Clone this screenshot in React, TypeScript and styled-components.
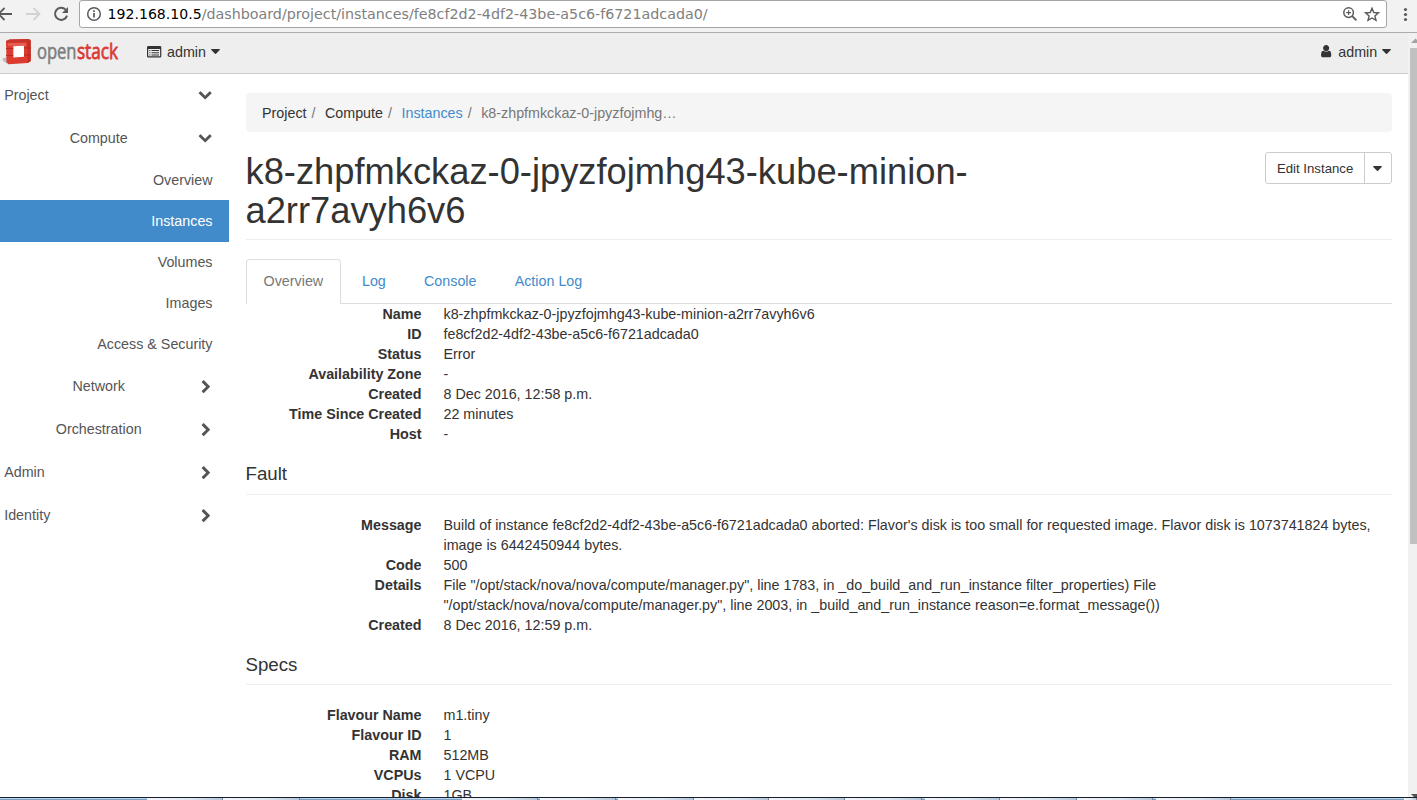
import React from "react";
import styled, { createGlobalStyle } from "styled-components";

const GlobalStyle = createGlobalStyle`
  * { box-sizing: border-box; }
  body { margin: 0; background: #fff; overflow: hidden; }
`;

const Screen = styled.div`
  height: 800px;
  width: 1417px;
  display: flex;
  flex-direction: column;
  overflow: hidden;
  font-family: "Liberation Sans", Arial, sans-serif;
  font-size: 14.3px;
  line-height: 20px;
  color: #333;
`;

/* Browser chrome */
const BrowserBar = styled.div`
  flex: none;
  height: 33px;
  display: flex;
  align-items: flex-start;
  background: #f2f2f2;
  border-bottom: 1px solid #ababab;
`;
const NavIcons = styled.div`
  width: 79px;
  height: 28px;
  flex: none;
`;
const AddressBox = styled.div`
  flex: none;
  width: 1308px;
  height: 28px;
  display: flex;
  align-items: center;
  padding: 0 5px 0 6px;
  background: #fff;
  border: 1px solid #a6a6a6;
  border-radius: 3px;
`;
const Url = styled.div`
  flex: 1;
  margin-left: 5.6px;
  font: 14.28px/20px "DejaVu Sans", sans-serif;
  color: #808080;
  white-space: nowrap;
`;
const Host = styled.span`
  font-size: 14.08px;
  color: #000;
`;
const MenuDots = styled.div`
  width: 30px;
  height: 28px;
`;

/* Page */
const Viewport = styled.div`
  flex: none;
  height: 764px;
  display: flex;
  overflow: hidden;
`;
const Page = styled.div`
  width: 1408px;
  flex: none;
  display: flex;
  flex-direction: column;
`;
const Scrollbar = styled.div`
  width: 9px;
  flex: none;
  display: flex;
  flex-direction: column;
  align-items: flex-end;
  background: #f1f1f1;
`;
const Thumb = styled.div`
  flex: none;
  width: 7px;
  height: 496px;
  margin-bottom: auto;
  background: #c1c1c1;
`;
const ScrollArrow = styled.div<{ $down?: boolean }>`
  flex: none;
  width: 6px;
  height: ${(p) => (p.$down ? "3px" : "15px")};
  svg { display: block; }
`;

const TopNav = styled.header`
  flex: none;
  height: 41px;
  display: flex;
  align-items: center;
  justify-content: space-between;
  padding: 0 16.6px 3px 0;
  background: #eee;
  border-bottom: 1px solid #ccc;
`;
const NavGroup = styled.div`
  display: flex;
  align-items: center;
`;
const Logo = styled.svg`
  display: block;
  margin-right: 22px;
`;
const NavLink = styled.span<{ $gap: number }>`
  display: flex;
  align-items: center;
  gap: ${(p) => p.$gap}px;
`;
const Caret = styled.svg`
  display: block;
  width: 9px;
  height: 5px;
  margin-left: 0.4px;
  fill: #333;
`;

const Body = styled.div`
  flex: 1;
  display: flex;
`;
const Sidebar = styled.nav`
  flex: none;
  width: 229px;
  color: #555;
`;
const NavGroupRow = styled.div<{ $nested?: boolean; $open?: boolean }>`
  height: ${(p) => (p.$open ? 42.675 : 42.9)}px;
  display: flex;
  align-items: center;
  justify-content: space-between;
  padding-right: 16px;
  padding-left: ${(p) => (p.$nested ? 0 : 4.2)}px;
`;
const NavGroupLabel = styled.span<{ $nested?: boolean }>`
  width: ${(p) => (p.$nested ? "197.4px" : "auto")};
  text-align: center;
`;
const Chevron = styled.svg<{ $open?: boolean }>`
  flex: none;
  width: 14.3px;
  height: 14.3px;
  margin: ${(p) => (p.$open ? "0 1.2px 1.6px 0" : "2px -0.5px 0 0")};
  fill: #555;
`;
const NavItem = styled.div<{ $active?: boolean }>`
  height: 41.1px;
  display: flex;
  align-items: center;
  justify-content: flex-end;
  padding-right: 16.5px;
  background: ${(p) => (p.$active ? "#428bca" : "transparent")};
  color: ${(p) => (p.$active ? "#fff" : "#555")};
`;

const Main = styled.main`
  flex: 1;
  padding: 19px 16.4px 0 16.5px;
`;
const Breadcrumb = styled.div`
  display: flex;
  height: 39px;
  padding: 10px 16.5px;
  background: #f5f5f5;
  border-radius: 4px;
  white-space: pre;
`;
const Crumb = styled.span<{ $tone?: "link" | "muted" }>`
  color: ${(p) => (p.$tone === "link" ? "#428bca" : p.$tone === "muted" ? "#777" : "#333")};
`;
const Slash = styled.span`
  padding: 0 9.5px 0 5px;
  color: #777;
`;
const TitleRow = styled.div`
  display: flex;
  justify-content: space-between;
  align-items: flex-start;
  height: 88px;
  margin-top: 20px;
  border-bottom: 1px solid #eee;
`;
const Title = styled.h1`
  width: 760px;
  margin: 0;
  font-size: 36.3px;
  line-height: 39px;
  font-weight: 400;
`;
const ButtonGroup = styled.div`
  display: flex;
  height: 32px;
  border: 1px solid #ccc;
  border-radius: 3px;
  font-size: 13.2px;
`;
const EditButton = styled.span`
  width: 99px;
  display: flex;
  align-items: center;
  justify-content: center;
  padding: 2px 0 0 1px;
  border-right: 1px solid #ccc;
`;
const ToggleButton = styled.span`
  width: 26px;
  display: flex;
  align-items: center;
  justify-content: center;
`;
const Tabs = styled.div`
  display: flex;
  height: 45px;
  margin-top: 19px;
  border-bottom: 1px solid #ddd;
`;
const Tab = styled.div<{ $active?: boolean }>`
  height: 45px;
  padding: 11px ${(p) => (p.$active ? 17.1 : 16.5)}px 0;
  margin-right: 3.2px;
  border: 1px solid ${(p) => (p.$active ? "#ddd" : "transparent")};
  border-bottom: 0;
  border-radius: 4px 4px 0 0;
  background: ${(p) => (p.$active ? "#fff" : "transparent")};
  color: ${(p) => (p.$active ? "#777" : "#428bca")};
`;
const SectionTitle = styled.h4`
  height: 30.6px;
  margin: 20px 0;
  font-size: 18.7px;
  line-height: 20px;
  font-weight: 400;
  border-bottom: 1px solid #eee;
`;
const Details = styled.dl`
  display: grid;
  grid-template-columns: 176px 1fr;
  column-gap: 22px;
  margin: 0;
`;
const Term = styled.dt`
  font-weight: 700;
  text-align: right;
`;
const Value = styled.dd`
  margin: 0;
`;

/* Taskbar sliver below the browser window */
const Taskbar = styled.div`
  flex: none;
  height: 3px;
  display: flex;
  background: #9dbfe0;
  border-top: 1px solid #16202c;
`;
const Task = styled.div<{ $w: number; $open?: boolean }>`
  flex: none;
  width: ${(p) => p.$w}px;
  height: 2px;
  background: ${(p) =>
    p.$open
      ? "linear-gradient(90deg, #f4f7fa, #dde6f0 60%, #b4c6da)"
      : "linear-gradient(#b9d6f0 50%, #7f9fc2 50%)"};
  border-right: ${(p) => (p.$open ? "1px solid #71859b" : "0")};
`;

const DOWN =
  "M1683 808l-742 741q-19 19-45 19t-45-19l-742-741q-19-19-19-45.5t19-45.5l166-165q19-19 45-19t45 19l531 531 531-531q19-19 45-19t45 19l166 165q19 19 19 45.5t-19 45.5z";
const RIGHT =
  "M1363 877l-742 742q-19 19-45 19t-45-19l-166-166q-19-19-19-45t19-45l531-531-531-531q-19-19-19-45t19-45l166-166q19-19 45-19t45 19l742 742q19 19 19 45t-19 45z";
const USER =
  "M1536 1399q0 109-62.5 187t-150.5 78h-854q-88 0-150.5-78t-62.5-187q0-85 8.5-160.5t31.5-152 58.5-131 94-89 134.5-34.5q131 128 313 128t313-128q76 0 134.5 34.5t94 89 58.5 131 31.5 152 8.5 160.5zm-256-887q0 159-112.5 271.5t-271.5 112.5-271.5-112.5-112.5-271.5 112.5-271.5 271.5-112.5 271.5 112.5 112.5 271.5z";

function CaretDown() {
  return (
    <Caret viewBox="0 0 9 5">
      <path d="M0.6 0H8.4Q9.1 0.3 8.7 0.9L5 4.7Q4.5 5.1 4 4.7L0.3 0.9Q-0.1 0.3 0.6 0Z" />
    </Caret>
  );
}

function Group({ label, nested, open }: { label: string; nested?: boolean; open?: boolean }) {
  return (
    <NavGroupRow $nested={nested} $open={open}>
      <NavGroupLabel $nested={nested}>{label}</NavGroupLabel>
      <Chevron $open={open} viewBox="0 0 1792 1792">
        <path d={open ? DOWN : RIGHT} />
      </Chevron>
    </NavGroupRow>
  );
}

function List({ rows }: { rows: [string, React.ReactNode][] }) {
  return (
    <Details>
      {rows.map(([k, v]) => (
        <React.Fragment key={k}>
          <Term>{k}</Term>
          <Value>{v}</Value>
        </React.Fragment>
      ))}
    </Details>
  );
}

const tasks: [number, boolean][] = [
  [147, false], [76, true], [77, true], [162, false], [76, true], [2, false], [76, true], [2, false],
  [76, true], [75, true], [76, true], [77, true], [3, false], [75, true], [77, true], [76, true],
  [3, false], [75, true], [173, false], [13, true],
];

export default function App() {
  return (
    <Screen>
      <GlobalStyle />
      <BrowserBar>
        <NavIcons>
          <svg width="79" height="28" fill="none" strokeWidth="1.8">
            <path d="M12 14H-1M4.5 8L-1.5 14L4.5 20" stroke="#5a5a5a" />
            <path d="M26 14H39M33.5 8L39.5 14L33.5 20" stroke="#d2d2d2" />
            <path d="M65.6 9.6A6.1 6.1 0 1 0 67 15.6" stroke="#5a5a5a" strokeWidth="2" />
            <path d="M68 7V13H62Z" fill="#5a5a5a" />
          </svg>
        </NavIcons>
        <AddressBox>
          <svg width="16" height="16" fill="none" stroke="#5a5a5a" strokeWidth="1.5">
            <circle cx="8" cy="8" r="6.3" />
            <path d="M8 7V11.6M8 4.3V5.9" strokeWidth="1.7" />
          </svg>
          <Url>
            <Host>192.168.10.5</Host>/dashboard/project/instances/fe8cf2d2-4df2-43be-a5c6-f6721adcada0/
          </Url>
          <svg width="40" height="18" fill="none" stroke="#5a5a5a" strokeWidth="1.5">
            <circle cx="7.6" cy="7.6" r="4.8" />
            <path d="M11.2 11.2L15.4 15.4" strokeWidth="1.8" />
            <path d="M7.6 5.2V10M5.2 7.6H10" strokeWidth="1.2" />
            <path
              d="M31 3.2L32.8 7.5L37.4 7.9L33.9 10.9L35 15.4L31 13L27 15.4L28.1 10.9L24.6 7.9L29.2 7.5Z"
              strokeWidth="1.4"
            />
          </svg>
        </AddressBox>
        <MenuDots>
          <svg width="30" height="28" fill="#5a5a5a">
            <circle cx="18.5" cy="9.5" r="1.6" />
            <circle cx="18.5" cy="14.5" r="1.6" />
            <circle cx="18.5" cy="19.5" r="1.6" />
          </svg>
        </MenuDots>
      </BrowserBar>

      <Viewport>
        <Page>
          <TopNav>
            <NavGroup>
              <Logo width="125" height="37" viewBox="0 0 125 37">
                <path d="M2.5 25.5L7 24V30.5L3 28Z" fill="#bdbdbd" />
                <path d="M6 8L9.5 6.5L29 6L30.7 7.5V28L28 30L8.5 31.3L6.5 29.5Z" fill="#dc3b30" />
                <path d="M6 8L9.5 6.5L29 6L30.7 7.5L28 9L7 9.8Z" fill="#c9342b" />
                <path d="M27.5 9L30.7 7.5V28L27.5 30Z" fill="#c42e25" />
                <path d="M8 10H26V13H8Z" fill="#e65c50" />
                <path d="M13.3 13.2L24 12.7V23.8L13.3 24.5Z" fill="#fff" />
                <path d="M6 15.5H13.3M24 15H31M6 22.5H13.3M24 22H31" stroke="#b52a22" strokeWidth="1" />
                <g fontFamily="Open Sans, sans-serif" fontSize="22.5">
                  <text transform="translate(36.9 25.5) scale(0.738 1)" fill="#7d7d7d" stroke="#7d7d7d" strokeWidth="0.6">
                    open
                  </text>
                  <text transform="translate(76.9 25.5) scale(0.765 1)" fill="#da3a33" stroke="#da3a33" strokeWidth="0.8">
                    stack
                  </text>
                </g>
              </Logo>
              <NavLink $gap={5}>
                <svg width="15" height="12" viewBox="0 0 15 12" fill="#333">
                  <path fillRule="evenodd" d="M1.5 0H13A1.3 1.3 0 0 1 14.3 1.3V10.2A1.3 1.3 0 0 1 13 11.5H1.3A1.3 1.3 0 0 1 0 10.2V1.3A1.3 1.3 0 0 1 1.3 0ZM1.2 3V10.3H13.1V3Z" />
                  <path d="M2.3 4H3.4V5H2.3ZM4.5 4H12V5H4.5ZM2.3 6.2H3.4V7.2H2.3ZM4.5 6.2H12V7.2H4.5ZM2.3 8.4H3.4V9.4H2.3ZM4.5 8.4H12V9.4H4.5Z" />
                </svg>
                admin
                <CaretDown />
              </NavLink>
            </NavGroup>
            <NavLink $gap={4.8}>
              <svg width="14.3" height="14.3" viewBox="0 0 1792 1792" fill="#333">
                <path d={USER} />
              </svg>
              admin
              <CaretDown />
            </NavLink>
          </TopNav>

          <Body>
            <Sidebar>
              <Group label="Project" open />
              <Group label="Compute" nested open />
              <NavItem>Overview</NavItem>
              <NavItem $active>Instances</NavItem>
              <NavItem>Volumes</NavItem>
              <NavItem>Images</NavItem>
              <NavItem>Access &amp; Security</NavItem>
              <Group label="Network" nested />
              <Group label="Orchestration" nested />
              <Group label="Admin" />
              <Group label="Identity" />
            </Sidebar>

            <Main>
              <Breadcrumb>
                <Crumb>Project</Crumb>
                <Slash>/</Slash>
                <Crumb>Compute</Crumb>
                <Slash>/</Slash>
                <Crumb $tone="link">Instances</Crumb>
                <Slash>/</Slash>
                <Crumb $tone="muted">k8-zhpfmkckaz-0-jpyzfojmhg…</Crumb>
              </Breadcrumb>

              <TitleRow>
                <Title>k8-zhpfmkckaz-0-jpyzfojmhg43-kube-minion-a2rr7avyh6v6</Title>
                <ButtonGroup>
                  <EditButton>Edit Instance</EditButton>
                  <ToggleButton>
                    <CaretDown />
                  </ToggleButton>
                </ButtonGroup>
              </TitleRow>

              <Tabs>
                <Tab $active>Overview</Tab>
                <Tab>Log</Tab>
                <Tab>Console</Tab>
                <Tab>Action Log</Tab>
              </Tabs>

              <List
                rows={[
                  ["Name", "k8-zhpfmkckaz-0-jpyzfojmhg43-kube-minion-a2rr7avyh6v6"],
                  ["ID", "fe8cf2d2-4df2-43be-a5c6-f6721adcada0"],
                  ["Status", "Error"],
                  ["Availability Zone", "-"],
                  ["Created", "8 Dec 2016, 12:58 p.m."],
                  ["Time Since Created", "22 minutes"],
                  ["Host", "-"],
                ]}
              />

              <SectionTitle>Fault</SectionTitle>
              <List
                rows={[
                  [
                    "Message",
                    "Build of instance fe8cf2d2-4df2-43be-a5c6-f6721adcada0 aborted: Flavor's disk is too small for requested image. Flavor disk is 1073741824 bytes, image is 6442450944 bytes.",
                  ],
                  ["Code", "500"],
                  [
                    "Details",
                    <>
                      File "/opt/stack/nova/nova/compute/manager.py", line 1783, in _do_build_and_run_instance
                      filter_properties) File
                      <br />
                      "/opt/stack/nova/nova/compute/manager.py", line 2003, in _build_and_run_instance
                      reason=e.format_message())
                    </>,
                  ],
                  ["Created", "8 Dec 2016, 12:59 p.m."],
                ]}
              />

              <SectionTitle>Specs</SectionTitle>
              <List
                rows={[
                  ["Flavour Name", "m1.tiny"],
                  ["Flavour ID", "1"],
                  ["RAM", "512MB"],
                  ["VCPUs", "1 VCPU"],
                  ["Disk", "1GB"],
                ]}
              />
            </Main>
          </Body>
        </Page>

        <Scrollbar>
          <ScrollArrow>
            <svg width="6" height="15">
              <path d="M0 10L4.5 5.5L9 10Z" fill="#a3a3a3" />
            </svg>
          </ScrollArrow>
          <Thumb />
          <ScrollArrow $down>
            <svg width="6" height="3">
              <path d="M0 0H6V3H3Z" fill="#505050" />
            </svg>
          </ScrollArrow>
        </Scrollbar>
      </Viewport>

      <Taskbar>
        {tasks.map(([w, open], i) => (
          <Task key={i} $w={w} $open={open} />
        ))}
      </Taskbar>
    </Screen>
  );
}
